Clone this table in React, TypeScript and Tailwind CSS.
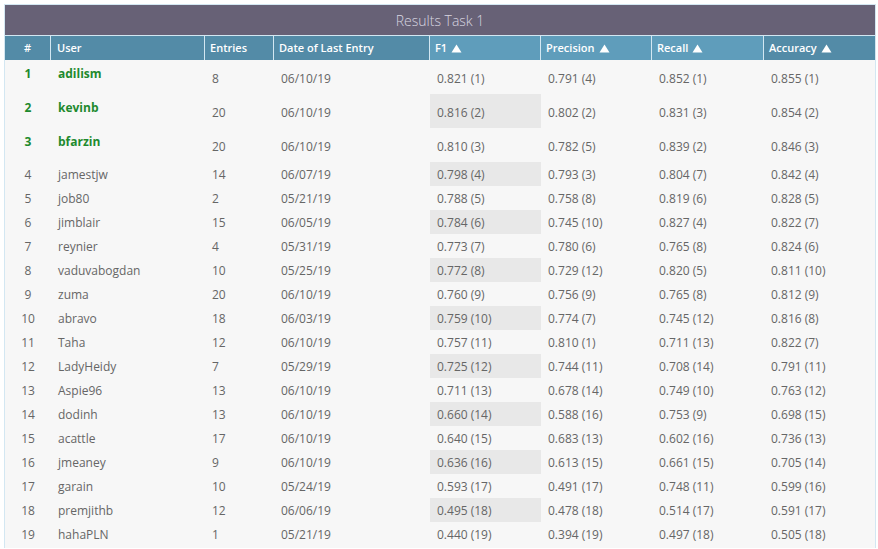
import React from "react";

type Row = [string, string, string, string, string, string, string];

const rows: Row[] = [
  ["adilism", "8", "06/10/19", "0.821 (1)", "0.791 (4)", "0.852 (1)", "0.855 (1)"],
  ["kevinb", "20", "06/10/19", "0.816 (2)", "0.802 (2)", "0.831 (3)", "0.854 (2)"],
  ["bfarzin", "20", "06/10/19", "0.810 (3)", "0.782 (5)", "0.839 (2)", "0.846 (3)"],
  ["jamestjw", "14", "06/07/19", "0.798 (4)", "0.793 (3)", "0.804 (7)", "0.842 (4)"],
  ["job80", "2", "05/21/19", "0.788 (5)", "0.758 (8)", "0.819 (6)", "0.828 (5)"],
  ["jimblair", "15", "06/05/19", "0.784 (6)", "0.745 (10)", "0.827 (4)", "0.822 (7)"],
  ["reynier", "4", "05/31/19", "0.773 (7)", "0.780 (6)", "0.765 (8)", "0.824 (6)"],
  ["vaduvabogdan", "10", "05/25/19", "0.772 (8)", "0.729 (12)", "0.820 (5)", "0.811 (10)"],
  ["zuma", "20", "06/10/19", "0.760 (9)", "0.756 (9)", "0.765 (8)", "0.812 (9)"],
  ["abravo", "18", "06/03/19", "0.759 (10)", "0.774 (7)", "0.745 (12)", "0.816 (8)"],
  ["Taha", "12", "06/10/19", "0.757 (11)", "0.810 (1)", "0.711 (13)", "0.822 (7)"],
  ["LadyHeidy", "7", "05/29/19", "0.725 (12)", "0.744 (11)", "0.708 (14)", "0.791 (11)"],
  ["Aspie96", "13", "06/10/19", "0.711 (13)", "0.678 (14)", "0.749 (10)", "0.763 (12)"],
  ["dodinh", "13", "06/10/19", "0.660 (14)", "0.588 (16)", "0.753 (9)", "0.698 (15)"],
  ["acattle", "17", "06/10/19", "0.640 (15)", "0.683 (13)", "0.602 (16)", "0.736 (13)"],
  ["jmeaney", "9", "06/10/19", "0.636 (16)", "0.613 (15)", "0.661 (15)", "0.705 (14)"],
  ["garain", "10", "05/24/19", "0.593 (17)", "0.491 (17)", "0.748 (11)", "0.599 (16)"],
  ["premjithb", "12", "06/06/19", "0.495 (18)", "0.478 (18)", "0.514 (17)", "0.591 (17)"],
  ["hahaPLN", "1", "05/21/19", "0.440 (19)", "0.394 (19)", "0.497 (18)", "0.505 (18)"],
];

const cols = "grid grid-cols-[46px_154px_69px_156px_111px_111px_112px_111px]";

function Tri() {
  return (
    <svg width="11" height="9" viewBox="0 0 11 9" className="ml-[4px] inline-block">
      <path d="M5.5 0.5 L10.5 8.5 L0.5 8.5 Z" fill="#ffffff" />
    </svg>
  );
}

export default function App() {
  return (
    <div className="min-h-[549px] w-[878px] bg-white pl-[4px] pt-[4px]" style={{ fontFamily: '"Open Sans", "Noto Sans", sans-serif' }}>
      <div className="w-[872px] border border-b-0 border-[#d3e7f2]">
        <div className="flex h-[31px] items-center justify-center border-b border-[#d3e7f2] bg-[#676176] text-[14px] font-light text-[#d8d6e0]">
          Results Task 1
        </div>
        <div className={`${cols} h-[24px] text-[11px] font-semibold text-white`}>
          <div className="flex items-center justify-center border-r border-[#d3e7f2] bg-[#538ba7] pt-[1px]">#</div>
          <div className="flex items-center border-r border-[#d3e7f2] bg-[#538ba7] pl-[6px] pt-[1px]">User</div>
          <div className="flex items-center border-r border-[#d3e7f2] bg-[#538ba7] pl-[5px] pt-[1px]">Entries</div>
          <div className="flex items-center border-r border-[#d3e7f2] bg-[#538ba7] pl-[5px] pt-[1px]">Date of Last Entry</div>
          <div className="flex items-center border-r border-[#d3e7f2] bg-[#5f9dbb] pl-[5px] pt-[1px]">F1<Tri /></div>
          <div className="flex items-center border-r border-[#d3e7f2] bg-[#5f9dbb] pl-[5px] pt-[1px]">Precision<Tri /></div>
          <div className="flex items-center border-r border-[#d3e7f2] bg-[#5f9dbb] pl-[5px] pt-[1px]">Recall<Tri /></div>
          <div className="flex items-center bg-[#538ba7] pl-[5px] pt-[1px]">Accuracy<Tri /></div>
        </div>
        <div className="bg-[#f7f7f7] pb-[2px] text-[12px] text-[#666666]">
          {rows.map((r, i) => {
            const top = i < 3;
            const hl = i % 2 === 1;
            const pt = top ? "pt-[3px]" : "pt-[2px]";
            return (
              <div key={i} className={`${cols} ${top ? "h-[34px]" : "h-[24px]"}`}>
                {top ? (
                  <>
                    <div className="pt-[5px] text-center font-bold text-[#1e8a2e]">{i + 1}</div>
                    <div className="pl-[7px] pt-[5px] font-bold text-[#1e8a2e]">{r[0]}</div>
                  </>
                ) : (
                  <>
                    <div className={`flex items-center justify-center ${pt}`}>{i + 1}</div>
                    <div className={`flex items-center pl-[7px] ${pt}`}>{r[0]}</div>
                  </>
                )}
                <div className={`flex items-center pl-[7px] ${pt}`}>{r[1]}</div>
                <div className={`flex items-center pl-[7px] ${pt}`}>{r[2]}</div>
                <div className={`flex items-center pl-[7px] ${pt} ${hl ? "bg-[#e8e8e8]" : ""}`}>{r[3]}</div>
                <div className={`flex items-center pl-[7px] ${pt}`}>{r[4]}</div>
                <div className={`flex items-center pl-[7px] ${pt}`}>{r[5]}</div>
                <div className={`flex items-center pl-[7px] ${pt}`}>{r[6]}</div>
              </div>
            );
          })}
        </div>
      </div>
    </div>
  );
}
